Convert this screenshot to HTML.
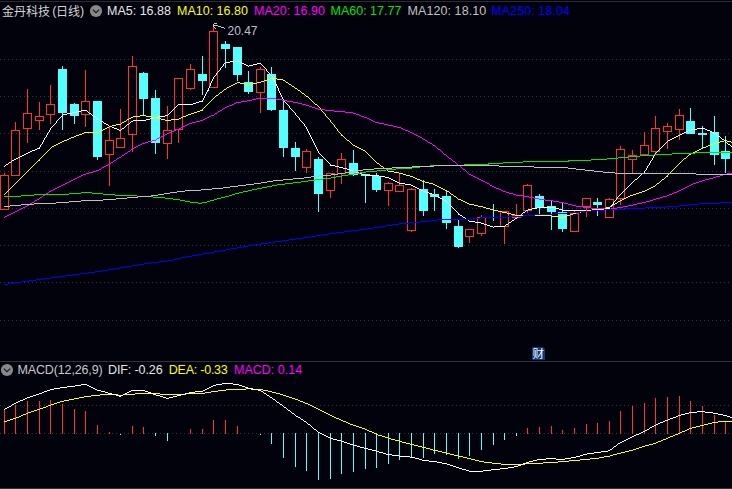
<!DOCTYPE html><html><head><meta charset="utf-8"><title>chart</title><style>
html,body{margin:0;padding:0;background:#02020c;}
body{width:732px;height:489px;overflow:hidden;position:relative;font-family:"Liberation Sans","Noto Sans CJK SC",sans-serif;}
.t{position:absolute;white-space:nowrap;font-size:12.5px;line-height:14px;height:14px;}
.cj{font-size:12px;position:relative;top:0.5px;}
</style></head><body>
<svg width="732" height="489" viewBox="0 0 732 489" shape-rendering="crispEdges" style="position:absolute;left:0;top:0">
<g stroke="#36363a" stroke-width="1" stroke-dasharray="1 3">
<line x1="0" y1="59.5" x2="732" y2="59.5"/>
<line x1="0" y1="96.5" x2="732" y2="96.5"/>
<line x1="0" y1="133.5" x2="732" y2="133.5"/>
<line x1="0" y1="171.5" x2="732" y2="171.5"/>
<line x1="0" y1="208.5" x2="732" y2="208.5"/>
<line x1="0" y1="245.5" x2="732" y2="245.5"/>
<line x1="0" y1="282.5" x2="732" y2="282.5"/>
<line x1="0" y1="320.5" x2="732" y2="320.5"/>
<line x1="0" y1="405.5" x2="732" y2="405.5"/>
<line x1="0" y1="433.5" x2="732" y2="433.5"/>
</g>
<rect x="0" y="1" width="732" height="1" fill="#2c2c30"/>
<rect x="22" y="0" width="1" height="1" fill="#3a3a3c"/>
<rect x="0" y="361" width="732" height="1" fill="#323234"/>
<rect x="0" y="488" width="732" height="1" fill="#323234"/>
<rect x="4" y="173" width="1" height="2" fill="#ff3232"/>
<rect x="0.5" y="175.5" width="8" height="34" fill="none" stroke="#ff3232" stroke-width="1"/>
<rect x="15" y="122" width="1" height="8" fill="#ff3232"/>
<rect x="11.5" y="130.5" width="8" height="45" fill="none" stroke="#ff3232" stroke-width="1"/>
<rect x="27" y="89" width="1" height="24" fill="#ff3232"/>
<rect x="27" y="129" width="1" height="14" fill="#ff3232"/>
<rect x="23.5" y="113.5" width="8" height="15" fill="none" stroke="#ff3232" stroke-width="1"/>
<rect x="39" y="102" width="1" height="14" fill="#ff3232"/>
<rect x="39" y="121" width="1" height="9" fill="#ff3232"/>
<rect x="35.5" y="116.5" width="8" height="4" fill="none" stroke="#ff3232" stroke-width="1"/>
<rect x="50" y="85" width="1" height="19" fill="#ff3232"/>
<rect x="50" y="115" width="1" height="9" fill="#ff3232"/>
<rect x="46.5" y="104.5" width="8" height="10" fill="none" stroke="#ff3232" stroke-width="1"/>
<rect x="62" y="66" width="1" height="64" fill="#54ffff"/>
<rect x="58" y="69" width="9" height="44" fill="#54ffff"/>
<rect x="74" y="103" width="1" height="21" fill="#54ffff"/>
<rect x="70" y="104" width="9" height="12" fill="#54ffff"/>
<rect x="85" y="70" width="1" height="31" fill="#ff3232"/>
<rect x="85" y="115" width="1" height="12" fill="#ff3232"/>
<rect x="81.5" y="101.5" width="8" height="13" fill="none" stroke="#ff3232" stroke-width="1"/>
<rect x="97" y="101" width="1" height="59" fill="#54ffff"/>
<rect x="93" y="101" width="9" height="56" fill="#54ffff"/>
<rect x="109" y="127" width="1" height="13" fill="#ff3232"/>
<rect x="109" y="155" width="1" height="31" fill="#ff3232"/>
<rect x="105.5" y="140.5" width="8" height="14" fill="none" stroke="#ff3232" stroke-width="1"/>
<rect x="120" y="109" width="1" height="29" fill="#ff3232"/>
<rect x="116.5" y="138.5" width="8" height="9" fill="none" stroke="#ff3232" stroke-width="1"/>
<rect x="132" y="56" width="1" height="10" fill="#ff3232"/>
<rect x="132" y="135" width="1" height="17" fill="#ff3232"/>
<rect x="128.5" y="66.5" width="8" height="68" fill="none" stroke="#ff3232" stroke-width="1"/>
<rect x="143" y="72" width="1" height="44" fill="#54ffff"/>
<rect x="139" y="73" width="9" height="26" fill="#54ffff"/>
<rect x="155" y="90" width="1" height="64" fill="#54ffff"/>
<rect x="151" y="98" width="9" height="45" fill="#54ffff"/>
<rect x="167" y="106" width="1" height="24" fill="#ff3232"/>
<rect x="167" y="144" width="1" height="15" fill="#ff3232"/>
<rect x="163.5" y="130.5" width="8" height="13" fill="none" stroke="#ff3232" stroke-width="1"/>
<rect x="178" y="130" width="1" height="13" fill="#ff3232"/>
<rect x="174.5" y="78.5" width="8" height="51" fill="none" stroke="#ff3232" stroke-width="1"/>
<rect x="190" y="64" width="1" height="5" fill="#ff3232"/>
<rect x="190" y="89" width="1" height="1" fill="#ff3232"/>
<rect x="186.5" y="69.5" width="8" height="19" fill="none" stroke="#ff3232" stroke-width="1"/>
<rect x="202" y="56" width="1" height="39" fill="#54ffff"/>
<rect x="198" y="74" width="9" height="7" fill="#54ffff"/>
<rect x="213" y="26" width="1" height="5" fill="#ff3232"/>
<rect x="209.5" y="31.5" width="8" height="56" fill="none" stroke="#ff3232" stroke-width="1"/>
<rect x="225" y="41" width="1" height="27" fill="#54ffff"/>
<rect x="221" y="44" width="9" height="5" fill="#54ffff"/>
<rect x="237" y="47" width="1" height="34" fill="#54ffff"/>
<rect x="233" y="47" width="9" height="28" fill="#54ffff"/>
<rect x="248" y="71" width="1" height="23" fill="#54ffff"/>
<rect x="244" y="82" width="9" height="10" fill="#54ffff"/>
<rect x="260" y="67" width="1" height="2" fill="#ff3232"/>
<rect x="260" y="93" width="1" height="20" fill="#ff3232"/>
<rect x="256.5" y="69.5" width="8" height="23" fill="none" stroke="#ff3232" stroke-width="1"/>
<rect x="271" y="67" width="1" height="44" fill="#54ffff"/>
<rect x="267" y="74" width="9" height="36" fill="#54ffff"/>
<rect x="283" y="101" width="1" height="56" fill="#54ffff"/>
<rect x="279" y="110" width="9" height="38" fill="#54ffff"/>
<rect x="295" y="142" width="1" height="29" fill="#54ffff"/>
<rect x="291" y="148" width="9" height="9" fill="#54ffff"/>
<rect x="306" y="149" width="1" height="2" fill="#ff3232"/>
<rect x="306" y="168" width="1" height="5" fill="#ff3232"/>
<rect x="302.5" y="151.5" width="8" height="16" fill="none" stroke="#ff3232" stroke-width="1"/>
<rect x="318" y="157" width="1" height="55" fill="#54ffff"/>
<rect x="314" y="159" width="9" height="35" fill="#54ffff"/>
<rect x="330" y="191" width="1" height="7" fill="#ff3232"/>
<rect x="326.5" y="173.5" width="8" height="17" fill="none" stroke="#ff3232" stroke-width="1"/>
<rect x="341" y="153" width="1" height="6" fill="#ff3232"/>
<rect x="341" y="174" width="1" height="10" fill="#ff3232"/>
<rect x="337.5" y="159.5" width="8" height="14" fill="none" stroke="#ff3232" stroke-width="1"/>
<rect x="353" y="150" width="1" height="26" fill="#54ffff"/>
<rect x="349" y="163" width="9" height="12" fill="#54ffff"/>
<rect x="365" y="174" width="1" height="29" fill="#54ffff"/>
<rect x="361" y="174" width="9" height="2" fill="#54ffff"/>
<rect x="376" y="173" width="1" height="19" fill="#54ffff"/>
<rect x="372" y="176" width="9" height="14" fill="#54ffff"/>
<rect x="388" y="182" width="1" height="1" fill="#ff3232"/>
<rect x="388" y="191" width="1" height="15" fill="#ff3232"/>
<rect x="384.5" y="183.5" width="8" height="7" fill="none" stroke="#ff3232" stroke-width="1"/>
<rect x="399" y="173" width="1" height="12" fill="#ff3232"/>
<rect x="395.5" y="185.5" width="8" height="6" fill="none" stroke="#ff3232" stroke-width="1"/>
<rect x="411" y="188" width="1" height="1" fill="#ff3232"/>
<rect x="411" y="231" width="1" height="1" fill="#ff3232"/>
<rect x="407.5" y="189.5" width="8" height="41" fill="none" stroke="#ff3232" stroke-width="1"/>
<rect x="423" y="180" width="1" height="36" fill="#54ffff"/>
<rect x="419" y="189" width="9" height="22" fill="#54ffff"/>
<rect x="434" y="189" width="1" height="22" fill="#54ffff"/>
<rect x="430" y="194" width="9" height="3" fill="#54ffff"/>
<rect x="446" y="190" width="1" height="39" fill="#54ffff"/>
<rect x="442" y="196" width="9" height="27" fill="#54ffff"/>
<rect x="458" y="219" width="1" height="29" fill="#54ffff"/>
<rect x="454" y="226" width="9" height="21" fill="#54ffff"/>
<rect x="469" y="237" width="1" height="6" fill="#ff3232"/>
<rect x="465.5" y="229.5" width="8" height="7" fill="none" stroke="#ff3232" stroke-width="1"/>
<rect x="481" y="215" width="1" height="2" fill="#ff3232"/>
<rect x="481" y="234" width="1" height="2" fill="#ff3232"/>
<rect x="477.5" y="217.5" width="8" height="16" fill="none" stroke="#ff3232" stroke-width="1"/>
<rect x="493" y="204" width="1" height="17" fill="#54ffff"/>
<rect x="489" y="217" width="9" height="1" fill="#54ffff"/>
<rect x="504" y="227" width="1" height="17" fill="#ff3232"/>
<rect x="500.5" y="211.5" width="8" height="15" fill="none" stroke="#ff3232" stroke-width="1"/>
<rect x="516" y="204" width="1" height="11" fill="#ff3232"/>
<rect x="512.5" y="215.5" width="8" height="2" fill="none" stroke="#ff3232" stroke-width="1"/>
<rect x="527" y="184" width="1" height="1" fill="#ff3232"/>
<rect x="527" y="211" width="1" height="2" fill="#ff3232"/>
<rect x="523.5" y="185.5" width="8" height="25" fill="none" stroke="#ff3232" stroke-width="1"/>
<rect x="539" y="194" width="1" height="20" fill="#54ffff"/>
<rect x="535" y="196" width="9" height="12" fill="#54ffff"/>
<rect x="551" y="201" width="1" height="29" fill="#54ffff"/>
<rect x="547" y="206" width="9" height="6" fill="#54ffff"/>
<rect x="562" y="202" width="1" height="30" fill="#54ffff"/>
<rect x="558" y="212" width="9" height="17" fill="#54ffff"/>
<rect x="574" y="210" width="1" height="3" fill="#ff3232"/>
<rect x="570.5" y="213.5" width="8" height="18" fill="none" stroke="#ff3232" stroke-width="1"/>
<rect x="586" y="207" width="1" height="10" fill="#ff3232"/>
<rect x="582.5" y="198.5" width="8" height="8" fill="none" stroke="#ff3232" stroke-width="1"/>
<rect x="597" y="198" width="1" height="18" fill="#54ffff"/>
<rect x="593" y="202" width="9" height="3" fill="#54ffff"/>
<rect x="609" y="198" width="1" height="1" fill="#ff3232"/>
<rect x="605.5" y="199.5" width="8" height="18" fill="none" stroke="#ff3232" stroke-width="1"/>
<rect x="620" y="146" width="1" height="3" fill="#ff3232"/>
<rect x="620" y="199" width="1" height="6" fill="#ff3232"/>
<rect x="616.5" y="149.5" width="8" height="49" fill="none" stroke="#ff3232" stroke-width="1"/>
<rect x="632" y="150" width="1" height="5" fill="#ff3232"/>
<rect x="632" y="160" width="1" height="13" fill="#ff3232"/>
<rect x="628.5" y="155.5" width="8" height="4" fill="none" stroke="#ff3232" stroke-width="1"/>
<rect x="644" y="132" width="1" height="13" fill="#ff3232"/>
<rect x="640.5" y="145.5" width="8" height="9" fill="none" stroke="#ff3232" stroke-width="1"/>
<rect x="655" y="116" width="1" height="12" fill="#ff3232"/>
<rect x="655" y="152" width="1" height="3" fill="#ff3232"/>
<rect x="651.5" y="128.5" width="8" height="23" fill="none" stroke="#ff3232" stroke-width="1"/>
<rect x="667" y="123" width="1" height="3" fill="#ff3232"/>
<rect x="667" y="132" width="1" height="17" fill="#ff3232"/>
<rect x="663.5" y="126.5" width="8" height="5" fill="none" stroke="#ff3232" stroke-width="1"/>
<rect x="679" y="109" width="1" height="6" fill="#ff3232"/>
<rect x="679" y="130" width="1" height="10" fill="#ff3232"/>
<rect x="675.5" y="115.5" width="8" height="14" fill="none" stroke="#ff3232" stroke-width="1"/>
<rect x="690" y="108" width="1" height="26" fill="#54ffff"/>
<rect x="686" y="121" width="9" height="13" fill="#54ffff"/>
<rect x="702" y="126" width="1" height="22" fill="#54ffff"/>
<rect x="698" y="133" width="9" height="2" fill="#54ffff"/>
<rect x="714" y="116" width="1" height="49" fill="#54ffff"/>
<rect x="710" y="132" width="9" height="23" fill="#54ffff"/>
<rect x="725" y="136" width="1" height="37" fill="#54ffff"/>
<rect x="721" y="151" width="9" height="8" fill="#54ffff"/>
<path fill="#ffffff" d="M365 175h14v1h-14zM117 129h2v1h-2zM691 129h6v1h-6zM705 129h2v1h-2zM97 119h2v1h-2zM146 119h4v1h-4zM537 207h18v1h-18zM9 162h2v1h-2zM230 61h10v1h-10zM335 166h4v1h-4zM526 210h2v1h-2zM562 210h24v1h-24zM587 210h11v1h-11zM14 159h2v1h-2zM99 120h2v1h-2zM133 120h13v1h-13zM67 113h5v1h-5zM89 113h2v1h-2zM165 115h3v1h-3zM399 183h6v1h-6zM668 140h2v1h-2zM405 184h6v1h-6zM154 117h5v1h-5zM523 212h2v1h-2zM114 128h3v1h-3zM122 128h2v1h-2zM697 128h8v1h-8zM32 150h3v1h-3zM512 220h2v1h-2zM77 111h4v1h-4zM93 116h2v1h-2zM159 116h6v1h-6zM438 197h2v1h-2zM104 123h2v1h-2zM678 135h2v1h-2zM193 103h3v1h-3zM379 176h6v1h-6zM532 208h5v1h-5zM555 208h4v1h-4zM604 208h6v1h-6zM119 130h2v1h-2zM688 130h3v1h-3zM707 130h3v1h-3zM423 191h3v1h-3zM225 62h5v1h-5zM240 62h2v1h-2zM28 152h2v1h-2zM676 136h2v1h-2zM718 136h2v1h-2zM63 114h4v1h-4zM339 167h4v1h-4zM6 164h2v1h-2zM330 165h5v1h-5zM343 168h4v1h-4zM490 226h3v1h-3zM494 226h11v1h-11zM475 222h6v1h-6zM509 222h2v1h-2zM244 64h2v1h-2zM253 64h4v1h-4zM419 189h2v1h-2zM674 137h2v1h-2zM150 118h4v1h-4zM728 144h2v1h-2zM356 172h3v1h-3zM463 217h2v1h-2zM487 225h3v1h-3zM178 104h15v1h-15zM385 177h4v1h-4zM395 181h2v1h-2zM109 126h3v1h-3zM415 187h2v1h-2zM528 209h4v1h-4zM559 209h3v1h-3zM598 209h6v1h-6zM421 190h2v1h-2zM458 214h2v1h-2zM106 124h2v1h-2zM127 124h2v1h-2zM24 154h2v1h-2zM347 169h3v1h-3zM101 121h2v1h-2zM131 121h2v1h-2zM481 223h3v1h-3zM686 131h2v1h-2zM710 131h2v1h-2zM429 193h3v1h-3zM426 192h3v1h-3zM199 101h4v1h-4zM37 148h3v1h-3zM484 224h3v1h-3zM506 224h2v1h-2zM81 110h6v1h-6zM684 132h2v1h-2zM712 132h2v1h-2zM442 199h2v1h-2zM682 133h2v1h-2zM714 133h2v1h-2zM16 158h2v1h-2zM30 151h2v1h-2zM112 127h2v1h-2zM444 200h2v1h-2zM20 156h2v1h-2zM72 112h5v1h-5zM670 139h2v1h-2zM722 139h2v1h-2zM469 221h6v1h-6zM413 186h2v1h-2zM440 198h2v1h-2zM432 194h2v1h-2zM246 65h2v1h-2zM249 65h4v1h-4zM35 149h2v1h-2zM350 170h3v1h-3zM434 195h2v1h-2zM196 102h3v1h-3zM466 219h2v1h-2zM353 171h3v1h-3zM436 196h2v1h-2zM12 160h2v1h-2zM242 63h2v1h-2zM257 63h4v1h-4zM362 174h3v1h-3zM22 155h2v1h-2zM515 218h2v1h-2zM391 179h2v1h-2zM635 179h2v1h-2zM26 153h2v1h-2zM359 173h3v1h-3zM642 173h2v1h-2zM680 134h2v1h-2zM18 157h2v1h-2zM417 188h2v1h-2zM389 178h2v1h-2zM411 185h2v1h-2zM207 90h2v1h-2zM672 138h2v1h-2zM397 182h2v1h-2zM393 180h2v1h-2zM460 215h2v1h-2zM519 215h2v1h-2zM298 117h1v1h-1zM454 209h1v1h-1zM60 117h1v1h-1zM307 129h1v2h-1zM61 116h1v1h-1zM644 171h1v2h-1zM613 202h1v2h-1zM631 183h1v1h-1zM450 205h1v1h-1zM208 88h1v2h-1zM468 220h1v1h-1zM311 137h1v2h-1zM299 118h1v2h-1zM212 79h1v2h-1zM293 111h1v1h-1zM314 143h1v2h-1zM609 207h1v1h-1zM446 201h1v1h-1zM456 211h1v1h-1zM266 69h1v2h-1zM43 140h1v2h-1zM5 165h1v1h-1zM289 106h1v2h-1zM92 115h1v1h-1zM277 86h1v2h-1zM55 123h1v1h-1zM716 134h1v1h-1zM290 108h1v1h-1zM641 174h1v1h-1zM514 219h1v1h-1zM308 131h1v2h-1zM505 225h1v1h-1zM651 160h1v1h-1zM666 142h1v1h-1zM457 212h1v1h-1zM275 82h1v2h-1zM204 96h1v2h-1zM206 92h1v2h-1zM296 115h1v1h-1zM205 94h1v2h-1zM281 95h1v2h-1zM627 187h1v1h-1zM518 216h1v1h-1zM171 111h1v1h-1zM295 113h1v2h-1zM315 145h1v2h-1zM453 208h1v1h-1zM39 147h1v1h-1zM324 158h1v1h-1zM458 213h1v1h-1zM297 116h1v1h-1zM617 197h1v1h-1zM129 123h1v1h-1zM717 135h1v1h-1zM291 109h1v1h-1zM108 125h1v1h-1zM625 189h1v1h-1zM282 97h1v2h-1zM169 113h1v1h-1zM320 154h1v1h-1zM103 122h1v1h-1zM177 105h1v1h-1zM465 218h1v1h-1zM49 130h1v2h-1zM655 153h1v2h-1zM656 152h1v1h-1zM306 127h1v2h-1zM623 191h1v1h-1zM313 141h1v2h-1zM91 114h1v1h-1zM321 155h1v1h-1zM647 166h1v2h-1zM273 78h1v2h-1zM280 93h1v2h-1zM210 83h1v3h-1zM725 141h1v1h-1zM203 98h1v2h-1zM202 100h1v1h-1zM220 68h1v2h-1zM222 66h1v1h-1zM646 168h1v2h-1zM455 210h1v1h-1zM648 165h1v1h-1zM586 211h1v1h-1zM310 135h1v2h-1zM216 73h1v2h-1zM59 118h1v1h-1zM327 161h1v1h-1zM451 206h1v1h-1zM218 71h1v1h-1zM322 156h1v1h-1zM45 137h1v1h-1zM294 112h1v1h-1zM47 133h1v2h-1zM652 158h1v2h-1zM323 157h1v1h-1zM318 151h1v2h-1zM57 120h1v1h-1zM214 76h1v1h-1zM328 162h1v1h-1zM640 175h1v1h-1zM215 75h1v1h-1zM278 88h1v3h-1zM213 77h1v2h-1zM44 138h1v2h-1zM650 161h1v2h-1zM4 166h1v1h-1zM653 156h1v2h-1zM304 124h1v2h-1zM727 143h1v1h-1zM53 125h1v1h-1zM269 73h1v1h-1zM54 124h1v1h-1zM56 121h1v2h-1zM517 217h1v1h-1zM522 213h1v1h-1zM274 80h1v2h-1zM633 181h1v1h-1zM309 133h1v2h-1zM508 223h1v1h-1zM285 102h1v1h-1zM626 188h1v1h-1zM221 67h1v1h-1zM51 127h1v1h-1zM50 128h1v2h-1zM52 126h1v1h-1zM276 84h1v2h-1zM634 180h1v1h-1zM664 144h1v1h-1zM611 205h1v1h-1zM624 190h1v1h-1zM41 144h1v1h-1zM87 111h1v1h-1zM521 214h1v1h-1zM316 147h1v2h-1zM42 142h1v2h-1zM305 126h1v1h-1zM325 159h1v1h-1zM632 182h1v1h-1zM211 81h1v2h-1zM662 146h1v1h-1zM663 145h1v1h-1zM292 110h1v1h-1zM272 76h1v2h-1zM40 145h1v2h-1zM286 103h1v1h-1zM223 64h1v2h-1zM525 211h1v1h-1zM649 163h1v2h-1zM511 221h1v1h-1zM312 139h1v2h-1zM329 163h1v1h-1zM661 147h1v1h-1zM175 107h1v1h-1zM95 117h1v1h-1zM219 70h1v1h-1zM279 91h1v2h-1zM287 104h1v1h-1zM267 71h1v1h-1zM46 135h1v2h-1zM621 193h1v1h-1zM622 192h1v1h-1zM209 86h1v2h-1zM268 72h1v1h-1zM326 160h1v1h-1zM726 142h1v1h-1zM283 99h1v2h-1zM173 109h1v1h-1zM58 119h1v1h-1zM302 122h1v1h-1zM248 66h1v1h-1zM126 125h1v1h-1zM660 148h1v1h-1zM619 195h1v1h-1zM620 194h1v1h-1zM121 129h1v1h-1zM172 110h1v1h-1zM288 105h1v1h-1zM658 150h1v1h-1zM616 198h1v2h-1zM317 149h1v2h-1zM217 72h1v1h-1zM8 163h1v1h-1zM720 137h1v1h-1zM284 101h1v1h-1zM303 123h1v1h-1zM654 155h1v1h-1zM612 204h1v1h-1zM615 200h1v1h-1zM207 91h1v1h-1zM638 177h1v1h-1zM270 74h1v1h-1zM639 176h1v1h-1zM721 138h1v1h-1zM732 147h1v1h-1zM449 204h1v1h-1zM271 75h1v1h-1zM637 178h1v1h-1zM462 216h1v1h-1zM265 68h1v1h-1zM11 161h1v1h-1zM330 164h1v1h-1zM176 106h1v1h-1zM88 112h1v1h-1zM261 64h1v1h-1zM610 206h1v1h-1zM300 120h1v1h-1zM630 184h1v1h-1zM174 108h1v1h-1zM628 186h1v1h-1zM301 121h1v1h-1zM493 227h1v1h-1zM224 63h1v1h-1zM96 118h1v1h-1zM629 185h1v1h-1zM262 65h1v1h-1zM452 207h1v1h-1zM659 149h1v1h-1zM730 145h1v1h-1zM667 141h1v1h-1zM447 202h1v1h-1zM448 203h1v1h-1zM48 132h1v1h-1zM263 66h1v1h-1zM657 151h1v1h-1zM319 153h1v1h-1zM665 143h1v1h-1zM264 67h1v1h-1zM124 127h1v1h-1zM125 126h1v1h-1zM130 122h1v1h-1zM618 196h1v1h-1zM170 112h1v1h-1zM62 115h1v1h-1zM731 146h1v1h-1zM724 140h1v1h-1zM645 170h1v1h-1zM614 201h1v1h-1zM168 114h1v1h-1z"/>
<path fill="#ffff00" d="M639 192h3v1h-3zM67 139h2v1h-2zM71 137h3v1h-3zM439 187h2v1h-2zM651 187h2v1h-2zM636 193h3v1h-3zM551 216h8v1h-8zM564 216h3v1h-3zM689 154h2v1h-2zM235 83h2v1h-2zM240 83h4v1h-4zM253 83h4v1h-4zM465 202h2v1h-2zM493 210h5v1h-5zM587 210h5v1h-5zM295 88h2v1h-2zM483 207h3v1h-3zM606 207h4v1h-4zM515 215h36v1h-36zM567 215h3v1h-3zM133 116h7v1h-7zM146 116h6v1h-6zM183 116h3v1h-3zM122 122h2v1h-2zM62 141h2v1h-2zM720 141h4v1h-4zM727 141h4v1h-4zM502 212h5v1h-5zM576 212h5v1h-5zM486 208h4v1h-4zM598 208h8v1h-8zM124 121h2v1h-2zM429 183h4v1h-4zM657 183h2v1h-2zM406 175h4v1h-4zM229 86h2v1h-2zM292 86h2v1h-2zM469 204h5v1h-5zM613 204h2v1h-2zM433 184h2v1h-2zM447 191h2v1h-2zM642 191h3v1h-3zM82 133h2v1h-2zM131 117h2v1h-2zM152 117h5v1h-5zM181 117h2v1h-2zM507 213h4v1h-4zM573 213h3v1h-3zM227 87h2v1h-2zM103 129h2v1h-2zM267 79h3v1h-3zM277 79h6v1h-6zM224 89h2v1h-2zM461 200h2v1h-2zM620 200h2v1h-2zM52 146h2v1h-2zM355 146h2v1h-2zM706 146h2v1h-2zM399 173h4v1h-4zM233 84h2v1h-2zM244 84h4v1h-4zM249 84h4v1h-4zM289 84h2v1h-2zM194 112h3v1h-3zM140 115h6v1h-6zM186 115h2v1h-2zM64 140h3v1h-3zM347 140h2v1h-2zM724 140h3v1h-3zM84 132h13v1h-13zM363 150h2v1h-2zM697 150h2v1h-2zM498 211h4v1h-4zM581 211h6v1h-6zM624 198h2v1h-2zM270 78h7v1h-7zM359 148h2v1h-2zM701 148h2v1h-2zM357 147h2v1h-2zM703 147h3v1h-3zM458 199h3v1h-3zM622 199h2v1h-2zM129 118h2v1h-2zM157 118h4v1h-4zM179 118h2v1h-2zM58 143h2v1h-2zM713 143h3v1h-3zM384 168h2v1h-2zM76 135h3v1h-3zM341 135h2v1h-2zM56 144h2v1h-2zM710 144h3v1h-3zM511 214h4v1h-4zM570 214h3v1h-3zM220 92h2v1h-2zM467 203h2v1h-2zM615 203h2v1h-2zM403 174h3v1h-3zM261 81h3v1h-3zM306 96h2v1h-2zM188 114h3v1h-3zM109 126h3v1h-3zM388 171h6v1h-6zM490 209h3v1h-3zM592 209h6v1h-6zM127 119h2v1h-2zM161 119h4v1h-4zM171 119h8v1h-8zM216 95h2v1h-2zM454 196h2v1h-2zM628 196h2v1h-2zM463 201h2v1h-2zM618 201h2v1h-2zM54 145h2v1h-2zM353 145h2v1h-2zM708 145h2v1h-2zM435 185h2v1h-2zM381 166h2v1h-2zM422 181h3v1h-3zM101 130h2v1h-2zM237 82h3v1h-3zM257 82h4v1h-4zM286 82h2v1h-2zM200 110h3v1h-3zM315 104h2v1h-2zM417 179h3v1h-3zM662 179h2v1h-2zM451 194h2v1h-2zM633 194h3v1h-3zM69 138h2v1h-2zM474 205h4v1h-4zM60 142h2v1h-2zM716 142h4v1h-4zM731 142h2v1h-2zM410 176h3v1h-3zM666 176h2v1h-2zM79 134h3v1h-3zM630 195h3v1h-3zM165 120h6v1h-6zM445 190h2v1h-2zM645 190h2v1h-2zM105 128h2v1h-2zM415 178h2v1h-2zM302 93h2v1h-2zM425 182h4v1h-4zM197 111h3v1h-3zM116 124h5v1h-5zM377 163h2v1h-2zM394 172h5v1h-5zM191 113h3v1h-3zM478 206h5v1h-5zM610 206h2v1h-2zM264 80h3v1h-3zM283 80h2v1h-2zM441 188h2v1h-2zM649 188h2v1h-2zM684 158h2v1h-2zM112 125h4v1h-4zM443 189h2v1h-2zM647 189h2v1h-2zM107 127h2v1h-2zM437 186h2v1h-2zM653 186h2v1h-2zM559 217h5v1h-5zM298 90h2v1h-2zM626 197h2v1h-2zM231 85h2v1h-2zM99 131h2v1h-2zM693 152h2v1h-2zM361 149h2v1h-2zM699 149h2v1h-2zM695 151h2v1h-2zM691 153h2v1h-2zM420 180h2v1h-2zM413 177h2v1h-2zM74 136h2v1h-2zM38 160h2v1h-2zM6 192h1v1h-1zM346 139h1v1h-1zM372 158h1v1h-1zM14 184h1v1h-1zM383 167h1v1h-1zM368 154h1v1h-1zM305 95h1v1h-1zM336 128h1v1h-1zM322 111h1v1h-1zM617 202h1v1h-1zM323 112h1v1h-1zM29 169h1v1h-1zM226 88h1v1h-1zM668 174h1v1h-1zM37 161h1v1h-1zM337 129h1v2h-1zM331 122h1v1h-1zM27 171h1v1h-1zM661 180h1v1h-1zM667 175h1v1h-1zM612 205h1v1h-1zM4 194h1v1h-1zM35 163h1v1h-1zM656 184h1v1h-1zM343 136h1v1h-1zM665 177h1v1h-1zM681 161h1v1h-1zM375 161h1v1h-1zM294 87h1v1h-1zM50 148h1v1h-1zM214 97h1v1h-1zM215 96h1v1h-1zM297 89h1v1h-1zM325 114h1v2h-1zM48 150h1v1h-1zM319 107h1v1h-1zM334 125h1v2h-1zM17 181h1v1h-1zM288 83h1v1h-1zM25 173h1v1h-1zM456 197h1v1h-1zM449 192h1v1h-1zM15 183h1v1h-1zM320 108h1v2h-1zM376 162h1v1h-1zM23 175h1v1h-1zM204 107h1v1h-1zM205 106h1v1h-1zM450 193h1v1h-1zM202 109h1v1h-1zM45 153h1v1h-1zM203 108h1v1h-1zM677 165h1v1h-1zM457 198h1v1h-1zM248 85h1v1h-1zM36 162h1v1h-1zM43 155h1v1h-1zM675 167h1v1h-1zM44 154h1v1h-1zM317 105h1v1h-1zM310 99h1v1h-1zM673 169h1v1h-1zM674 168h1v1h-1zM655 185h1v1h-1zM11 187h1v1h-1zM121 123h1v1h-1zM332 123h1v1h-1zM318 106h1v1h-1zM352 144h1v1h-1zM219 93h1v1h-1zM659 182h1v1h-1zM660 181h1v1h-1zM33 165h1v1h-1zM300 91h1v1h-1zM327 117h1v1h-1zM24 174h1v1h-1zM218 94h1v1h-1zM223 90h1v1h-1zM31 167h1v1h-1zM301 92h1v1h-1zM98 132h1v1h-1zM349 141h1v1h-1zM333 124h1v1h-1zM212 99h1v1h-1zM213 98h1v1h-1zM312 101h1v1h-1zM386 169h1v1h-1zM22 176h1v1h-1zM308 97h1v1h-1zM30 168h1v1h-1zM46 152h1v1h-1zM222 91h1v1h-1zM97 133h1v1h-1zM211 100h1v1h-1zM330 120h1v2h-1zM676 166h1v1h-1zM13 185h1v1h-1zM683 159h1v1h-1zM350 142h1v1h-1zM210 101h1v1h-1zM369 155h1v1h-1zM21 177h1v1h-1zM314 103h1v1h-1zM339 132h1v1h-1zM12 186h1v1h-1zM365 151h1v1h-1zM682 160h1v1h-1zM19 179h1v1h-1zM10 188h1v1h-1zM686 157h1v1h-1zM34 164h1v1h-1zM18 180h1v1h-1zM285 81h1v1h-1zM42 156h1v1h-1zM311 100h1v1h-1zM291 85h1v1h-1zM326 116h1v1h-1zM340 133h1v1h-1zM32 166h1v1h-1zM664 178h1v1h-1zM671 171h1v1h-1zM40 158h1v1h-1zM672 170h1v1h-1zM9 189h1v1h-1zM379 164h1v1h-1zM341 134h1v1h-1zM367 153h1v1h-1zM670 172h1v1h-1zM453 195h1v1h-1zM7 191h1v1h-1zM328 118h1v1h-1zM380 165h1v1h-1zM373 159h1v1h-1zM126 120h1v1h-1zM5 193h1v1h-1zM313 102h1v1h-1zM387 170h1v1h-1zM309 98h1v1h-1zM51 147h1v1h-1zM20 178h1v1h-1zM688 155h1v1h-1zM329 119h1v1h-1zM28 170h1v1h-1zM338 131h1v1h-1zM374 160h1v1h-1zM209 102h1v1h-1zM351 143h1v1h-1zM687 156h1v1h-1zM344 137h1v1h-1zM370 156h1v1h-1zM26 172h1v1h-1zM324 113h1v1h-1zM207 104h1v1h-1zM208 103h1v1h-1zM366 152h1v1h-1zM41 157h1v1h-1zM680 162h1v1h-1zM206 105h1v1h-1zM49 149h1v1h-1zM304 94h1v1h-1zM321 110h1v1h-1zM335 127h1v1h-1zM39 159h1v1h-1zM345 138h1v1h-1zM8 190h1v1h-1zM678 164h1v1h-1zM371 157h1v1h-1zM679 163h1v1h-1zM47 151h1v1h-1zM16 182h1v1h-1zM669 173h1v1h-1z"/>
<path fill="#ff00ff" d="M83 174h3v1h-3zM469 174h2v1h-2zM723 174h4v1h-4zM207 117h2v1h-2zM364 117h3v1h-3zM65 183h2v1h-2zM487 183h2v1h-2zM693 183h3v1h-3zM218 111h2v1h-2zM334 111h11v1h-11zM205 118h2v1h-2zM367 118h2v1h-2zM21 208h2v1h-2zM591 208h14v1h-14zM611 208h6v1h-6zM169 132h2v1h-2zM410 132h2v1h-2zM179 128h2v1h-2zM401 128h2v1h-2zM148 141h4v1h-4zM23 207h2v1h-2zM583 207h8v1h-8zM617 207h6v1h-6zM43 195h2v1h-2zM516 195h7v1h-7zM667 195h2v1h-2zM183 126h2v1h-2zM393 126h4v1h-4zM523 196h6v1h-6zM663 196h4v1h-4zM35 200h2v1h-2zM545 200h8v1h-8zM650 200h3v1h-3zM176 129h3v1h-3zM403 129h2v1h-2zM79 176h2v1h-2zM473 176h2v1h-2zM716 176h4v1h-4zM30 203h2v1h-2zM564 203h4v1h-4zM637 203h5v1h-5zM40 197h2v1h-2zM529 197h5v1h-5zM660 197h3v1h-3zM142 143h3v1h-3zM430 143h2v1h-2zM89 172h4v1h-4zM174 130h2v1h-2zM405 130h3v1h-3zM159 137h2v1h-2zM420 137h2v1h-2zM223 108h2v1h-2zM315 108h3v1h-3zM104 166h2v1h-2zM252 99h4v1h-4zM276 99h6v1h-6zM513 194h3v1h-3zM669 194h3v1h-3zM232 104h2v1h-2zM302 104h4v1h-4zM181 127h2v1h-2zM397 127h4v1h-4zM234 103h2v1h-2zM298 103h4v1h-4zM189 123h3v1h-3zM379 123h5v1h-5zM157 138h2v1h-2zM117 158h2v1h-2zM449 158h2v1h-2zM453 161h2v1h-2zM165 134h2v1h-2zM414 134h2v1h-2zM73 179h2v1h-2zM479 179h2v1h-2zM705 179h4v1h-4zM96 170h3v1h-3zM111 162h2v1h-2zM256 98h20v1h-20zM93 171h3v1h-3zM86 173h3v1h-3zM727 173h6v1h-6zM163 135h2v1h-2zM416 135h2v1h-2zM25 206h2v1h-2zM576 206h7v1h-7zM623 206h5v1h-5zM171 131h3v1h-3zM408 131h2v1h-2zM32 202h2v1h-2zM559 202h5v1h-5zM642 202h4v1h-4zM61 185h2v1h-2zM490 185h2v1h-2zM689 185h2v1h-2zM318 109h7v1h-7zM200 120h3v1h-3zM371 120h2v1h-2zM236 102h5v1h-5zM293 102h5v1h-5zM17 210h2v1h-2zM161 136h2v1h-2zM418 136h2v1h-2zM19 209h2v1h-2zM605 209h6v1h-6zM247 100h5v1h-5zM282 100h5v1h-5zM534 198h5v1h-5zM656 198h4v1h-4zM215 113h2v1h-2zM353 113h3v1h-3zM187 124h2v1h-2zM384 124h4v1h-4zM185 125h2v1h-2zM388 125h5v1h-5zM220 110h2v1h-2zM325 110h9v1h-9zM229 105h3v1h-3zM306 105h3v1h-3zM241 101h6v1h-6zM287 101h6v1h-6zM553 201h6v1h-6zM646 201h4v1h-4zM69 181h2v1h-2zM483 181h2v1h-2zM699 181h3v1h-3zM345 112h8v1h-8zM27 205h2v1h-2zM572 205h4v1h-4zM628 205h5v1h-5zM136 146h2v1h-2zM57 187h2v1h-2zM494 187h2v1h-2zM685 187h2v1h-2zM131 149h2v1h-2zM438 149h2v1h-2zM37 199h2v1h-2zM539 199h6v1h-6zM653 199h3v1h-3zM134 147h2v1h-2zM568 204h4v1h-4zM633 204h4v1h-4zM196 121h4v1h-4zM373 121h2v1h-2zM81 175h2v1h-2zM471 175h2v1h-2zM720 175h3v1h-3zM356 114h3v1h-3zM102 167h2v1h-2zM211 115h3v1h-3zM359 115h2v1h-2zM77 177h2v1h-2zM475 177h2v1h-2zM713 177h3v1h-3zM506 192h3v1h-3zM674 192h3v1h-3zM67 182h2v1h-2zM485 182h2v1h-2zM696 182h3v1h-3zM145 142h3v1h-3zM428 142h2v1h-2zM225 107h2v1h-2zM312 107h3v1h-3zM53 189h2v1h-2zM499 189h2v1h-2zM681 189h2v1h-2zM51 190h2v1h-2zM501 190h2v1h-2zM679 190h2v1h-2zM71 180h2v1h-2zM481 180h2v1h-2zM702 180h3v1h-3zM152 140h4v1h-4zM425 140h2v1h-2zM46 193h2v1h-2zM509 193h4v1h-4zM672 193h2v1h-2zM227 106h2v1h-2zM309 106h3v1h-3zM49 191h2v1h-2zM503 191h3v1h-3zM677 191h2v1h-2zM15 211h2v1h-2zM55 188h2v1h-2zM496 188h3v1h-3zM683 188h2v1h-2zM11 213h2v1h-2zM423 139h2v1h-2zM63 184h2v1h-2zM691 184h2v1h-2zM203 119h2v1h-2zM369 119h2v1h-2zM444 154h2v1h-2zM122 155h2v1h-2zM108 164h2v1h-2zM192 122h4v1h-4zM375 122h4v1h-4zM209 116h2v1h-2zM361 116h3v1h-3zM99 169h2v1h-2zM463 169h2v1h-2zM75 178h2v1h-2zM477 178h2v1h-2zM709 178h4v1h-4zM7 215h2v1h-2zM59 186h2v1h-2zM492 186h2v1h-2zM687 186h2v1h-2zM125 153h2v1h-2zM128 151h2v1h-2zM114 160h2v1h-2zM106 165h2v1h-2zM458 165h2v1h-2zM138 145h2v1h-2zM433 145h2v1h-2zM13 212h2v1h-2zM5 216h2v1h-2zM9 214h2v1h-2zM119 157h2v1h-2zM140 144h2v1h-2zM167 133h2v1h-2zM412 133h2v1h-2zM39 198h1v1h-1zM214 114h1v1h-1zM222 109h1v1h-1zM467 172h1v1h-1zM432 144h1v1h-1zM442 152h1v1h-1zM435 146h1v1h-1zM110 163h1v1h-1zM127 152h1v1h-1zM489 184h1v1h-1zM446 155h1v1h-1zM156 139h1v1h-1zM457 164h1v1h-1zM460 166h1v1h-1zM443 153h1v1h-1zM436 147h1v1h-1zM427 141h1v1h-1zM34 201h1v1h-1zM42 196h1v1h-1zM217 112h1v1h-1zM468 173h1v1h-1zM461 167h1v1h-1zM130 150h1v1h-1zM437 148h1v1h-1zM447 156h1v1h-1zM440 150h1v1h-1zM448 157h1v1h-1zM465 170h1v1h-1zM451 159h1v1h-1zM121 156h1v1h-1zM29 204h1v1h-1zM45 194h1v1h-1zM113 161h1v1h-1zM101 168h1v1h-1zM422 138h1v1h-1zM462 168h1v1h-1zM133 148h1v1h-1zM441 151h1v1h-1zM452 160h1v1h-1zM124 154h1v1h-1zM4 217h1v1h-1zM455 162h1v1h-1zM48 192h1v1h-1zM456 163h1v1h-1zM116 159h1v1h-1zM466 171h1v1h-1z"/>
<path fill="#00e600" d="M34 194h35v1h-35zM103 194h12v1h-12zM232 194h3v1h-3zM503 162h20v1h-20zM366 171h11v1h-11zM173 199h7v1h-7zM214 199h3v1h-3zM293 182h8v1h-8zM315 179h8v1h-8zM81 192h11v1h-11zM239 192h4v1h-4zM523 161h46v1h-46zM640 155h14v1h-14zM21 195h13v1h-13zM115 195h22v1h-22zM229 195h3v1h-3zM153 197h12v1h-12zM221 197h4v1h-4zM607 158h11v1h-11zM430 165h34v1h-34zM190 202h8v1h-8zM202 202h5v1h-5zM69 193h12v1h-12zM92 193h11v1h-11zM235 193h4v1h-4zM4 196h17v1h-17zM137 196h16v1h-16zM225 196h4v1h-4zM285 183h8v1h-8zM672 153h23v1h-23zM331 177h5v1h-5zM654 154h18v1h-18zM412 167h8v1h-8zM618 157h10v1h-10zM272 185h5v1h-5zM568 160h23v1h-23zM695 152h38v1h-38zM323 178h8v1h-8zM180 200h5v1h-5zM210 200h4v1h-4zM252 189h5v1h-5zM386 169h10v1h-10zM420 166h10v1h-10zM628 156h12v1h-12zM277 184h8v1h-8zM591 159h16v1h-16zM198 203h4v1h-4zM377 170h9v1h-9zM464 164h25v1h-25zM165 198h8v1h-8zM217 198h4v1h-4zM396 168h16v1h-16zM348 174h6v1h-6zM267 186h5v1h-5zM488 163h15v1h-15zM248 190h4v1h-4zM354 173h6v1h-6zM301 181h7v1h-7zM360 172h6v1h-6zM308 180h7v1h-7zM243 191h5v1h-5zM342 175h6v1h-6zM185 201h5v1h-5zM207 201h3v1h-3zM262 187h5v1h-5zM336 176h6v1h-6zM257 188h5v1h-5z"/>
<path fill="#c0c0c0" d="M34 203h22v1h-22zM434 165h65v1h-65zM331 174h7v1h-7zM696 174h37v1h-37zM392 167h20v1h-20zM534 167h34v1h-34zM338 173h7v1h-7zM615 173h81v1h-81zM116 198h11v1h-11zM238 185h8v1h-8zM69 201h12v1h-12zM212 188h11v1h-11zM21 204h13v1h-13zM138 196h13v1h-13zM10 205h11v1h-11zM412 166h22v1h-22zM499 166h35v1h-35zM345 172h6v1h-6zM603 172h12v1h-12zM127 197h11v1h-11zM185 190h16v1h-16zM164 193h6v1h-6zM273 180h10v1h-10zM254 183h7v1h-7zM363 169h11v1h-11zM576 169h9v1h-9zM81 200h22v1h-22zM357 170h6v1h-6zM585 170h9v1h-9zM319 175h12v1h-12zM293 178h11v1h-11zM374 168h18v1h-18zM568 168h8v1h-8zM103 199h13v1h-13zM230 186h8v1h-8zM170 192h7v1h-7zM56 202h13v1h-13zM201 189h11v1h-11zM4 206h6v1h-6zM177 191h8v1h-8zM158 194h6v1h-6zM304 177h7v1h-7zM351 171h6v1h-6zM594 171h9v1h-9zM311 176h8v1h-8zM267 181h6v1h-6zM151 195h7v1h-7zM283 179h10v1h-10zM223 187h7v1h-7zM246 184h8v1h-8zM261 182h6v1h-6z"/>
<path fill="#0000ff" d="M36 279h7v1h-7zM138 264h6v1h-6zM15 282h7v1h-7zM203 253h6v1h-6zM261 243h7v1h-7zM309 236h7v1h-7zM420 221h9v1h-9zM88 272h7v1h-7zM437 219h35v1h-35zM289 239h7v1h-7zM689 204h10v1h-10zM177 258h4v1h-4zM359 229h8v1h-8zM625 208h20v1h-20zM480 217h27v1h-27zM22 281h7v1h-7zM209 252h5v1h-5zM580 211h11v1h-11zM429 220h8v1h-8zM282 240h7v1h-7zM380 226h6v1h-6zM535 214h19v1h-19zM51 277h7v1h-7zM296 238h7v1h-7zM699 203h21v1h-21zM666 206h13v1h-13zM523 215h12v1h-12zM605 209h20v1h-20zM554 213h13v1h-13zM268 242h7v1h-7zM373 227h7v1h-7zM507 216h16v1h-16zM386 225h6v1h-6zM58 276h7v1h-7zM220 250h6v1h-6zM254 244h7v1h-7zM114 268h6v1h-6zM29 280h7v1h-7zM132 265h6v1h-6zM591 210h14v1h-14zM303 237h6v1h-6zM409 222h11v1h-11zM151 262h8v1h-8zM120 267h6v1h-6zM336 232h8v1h-8zM192 255h6v1h-6zM275 241h7v1h-7zM392 224h7v1h-7zM65 275h8v1h-8zM645 207h21v1h-21zM226 249h5v1h-5zM242 246h6v1h-6zM126 266h6v1h-6zM248 245h6v1h-6zM351 230h8v1h-8zM73 274h7v1h-7zM567 212h13v1h-13zM323 234h6v1h-6zM186 256h6v1h-6zM198 254h5v1h-5zM720 202h13v1h-13zM679 205h10v1h-10zM329 233h7v1h-7zM173 259h4v1h-4zM4 284h4v1h-4zM344 231h7v1h-7zM472 218h8v1h-8zM367 228h6v1h-6zM159 261h8v1h-8zM8 283h7v1h-7zM108 269h6v1h-6zM181 257h5v1h-5zM214 251h6v1h-6zM144 263h7v1h-7zM167 260h6v1h-6zM95 271h7v1h-7zM102 270h6v1h-6zM399 223h10v1h-10zM316 235h7v1h-7zM231 248h6v1h-6zM237 247h5v1h-5zM43 278h8v1h-8zM80 273h8v1h-8z"/>
<rect x="214" y="23" width="3" height="1" fill="#c8c8c8"/>
<rect x="213" y="24" width="1" height="3" fill="#c8c8c8"/>
<rect x="214" y="25" width="4" height="1" fill="#c8c8c8"/>
<rect x="218" y="26" width="3" height="1" fill="#c8c8c8"/>
<rect x="221" y="27" width="3" height="1" fill="#c8c8c8"/>
<rect x="224" y="28" width="1" height="1" fill="#c8c8c8"/>
<rect x="214" y="27" width="1" height="1" fill="#c8c8c8"/>
<rect x="215" y="28" width="1" height="1" fill="#c8c8c8"/>
<rect x="4" y="409" width="1" height="25" fill="#ff3232"/>
<rect x="15" y="405" width="1" height="29" fill="#ff3232"/>
<rect x="27" y="401" width="1" height="33" fill="#ff3232"/>
<rect x="39" y="401" width="1" height="33" fill="#ff3232"/>
<rect x="50" y="400" width="1" height="34" fill="#ff3232"/>
<rect x="62" y="404" width="1" height="30" fill="#ff3232"/>
<rect x="74" y="409" width="1" height="25" fill="#ff3232"/>
<rect x="85" y="411" width="1" height="23" fill="#ff3232"/>
<rect x="97" y="425" width="1" height="9" fill="#ff3232"/>
<rect x="109" y="432" width="1" height="2" fill="#ff3232"/>
<rect x="120" y="434" width="1" height="1" fill="#54ffff"/>
<rect x="132" y="426" width="1" height="8" fill="#ff3232"/>
<rect x="143" y="427" width="1" height="7" fill="#ff3232"/>
<rect x="155" y="433" width="1" height="3" fill="#54ffff"/>
<rect x="167" y="433" width="1" height="8" fill="#54ffff"/>
<rect x="190" y="429" width="1" height="5" fill="#ff3232"/>
<rect x="202" y="429" width="1" height="5" fill="#ff3232"/>
<rect x="213" y="420" width="1" height="14" fill="#ff3232"/>
<rect x="225" y="420" width="1" height="14" fill="#ff3232"/>
<rect x="237" y="426" width="1" height="8" fill="#ff3232"/>
<rect x="260" y="434" width="1" height="1" fill="#54ffff"/>
<rect x="271" y="433" width="1" height="11" fill="#54ffff"/>
<rect x="283" y="433" width="1" height="25" fill="#54ffff"/>
<rect x="295" y="433" width="1" height="34" fill="#54ffff"/>
<rect x="306" y="433" width="1" height="38" fill="#54ffff"/>
<rect x="318" y="433" width="1" height="47" fill="#54ffff"/>
<rect x="330" y="433" width="1" height="46" fill="#54ffff"/>
<rect x="341" y="433" width="1" height="41" fill="#54ffff"/>
<rect x="353" y="433" width="1" height="39" fill="#54ffff"/>
<rect x="365" y="433" width="1" height="36" fill="#54ffff"/>
<rect x="376" y="433" width="1" height="35" fill="#54ffff"/>
<rect x="388" y="433" width="1" height="31" fill="#54ffff"/>
<rect x="399" y="433" width="1" height="27" fill="#54ffff"/>
<rect x="411" y="433" width="1" height="24" fill="#54ffff"/>
<rect x="423" y="433" width="1" height="25" fill="#54ffff"/>
<rect x="434" y="433" width="1" height="21" fill="#54ffff"/>
<rect x="446" y="433" width="1" height="22" fill="#54ffff"/>
<rect x="458" y="433" width="1" height="26" fill="#54ffff"/>
<rect x="469" y="433" width="1" height="23" fill="#54ffff"/>
<rect x="481" y="433" width="1" height="17" fill="#54ffff"/>
<rect x="493" y="433" width="1" height="12" fill="#54ffff"/>
<rect x="504" y="433" width="1" height="7" fill="#54ffff"/>
<rect x="516" y="433" width="1" height="3" fill="#54ffff"/>
<rect x="527" y="428" width="1" height="6" fill="#ff3232"/>
<rect x="539" y="427" width="1" height="7" fill="#ff3232"/>
<rect x="551" y="426" width="1" height="8" fill="#ff3232"/>
<rect x="562" y="430" width="1" height="4" fill="#ff3232"/>
<rect x="574" y="428" width="1" height="6" fill="#ff3232"/>
<rect x="586" y="424" width="1" height="10" fill="#ff3232"/>
<rect x="597" y="423" width="1" height="11" fill="#ff3232"/>
<rect x="609" y="421" width="1" height="13" fill="#ff3232"/>
<rect x="620" y="411" width="1" height="23" fill="#ff3232"/>
<rect x="632" y="406" width="1" height="28" fill="#ff3232"/>
<rect x="644" y="403" width="1" height="31" fill="#ff3232"/>
<rect x="655" y="398" width="1" height="36" fill="#ff3232"/>
<rect x="667" y="397" width="1" height="37" fill="#ff3232"/>
<rect x="679" y="396" width="1" height="38" fill="#ff3232"/>
<rect x="690" y="401" width="1" height="33" fill="#ff3232"/>
<rect x="702" y="406" width="1" height="28" fill="#ff3232"/>
<rect x="714" y="415" width="1" height="19" fill="#ff3232"/>
<rect x="725" y="422" width="1" height="12" fill="#ff3232"/>
<path fill="#ffff00" d="M218 390h8v1h-8zM263 390h5v1h-5zM353 425h3v1h-3zM700 425h4v1h-4zM385 437h3v1h-3zM668 437h2v1h-2zM4 421h3v1h-3zM343 421h3v1h-3zM718 421h15v1h-15zM475 460h4v1h-4zM569 460h11v1h-11zM31 411h3v1h-3zM322 411h2v1h-2zM91 395h9v1h-9zM118 395h5v1h-5zM283 395h3v1h-3zM484 462h8v1h-8zM543 462h15v1h-15zM458 456h5v1h-5zM604 456h6v1h-6zM492 463h9v1h-9zM525 463h18v1h-18zM205 392h6v1h-6zM272 392h4v1h-4zM43 407h3v1h-3zM314 407h2v1h-2zM54 403h3v1h-3zM305 403h3v1h-3zM501 464h24v1h-24zM356 426h3v1h-3zM696 426h4v1h-4zM135 393h25v1h-25zM186 393h19v1h-19zM276 393h4v1h-4zM51 404h3v1h-3zM308 404h2v1h-2zM100 394h18v1h-18zM123 394h12v1h-12zM160 394h26v1h-26zM280 394h3v1h-3zM391 439h4v1h-4zM663 439h3v1h-3zM348 423h2v1h-2zM708 423h4v1h-4zM37 409h3v1h-3zM318 409h2v1h-2zM467 458h4v1h-4zM590 458h9v1h-9zM410 444h4v1h-4zM649 444h4v1h-4zM226 389h20v1h-20zM251 389h12v1h-12zM48 405h3v1h-3zM310 405h2v1h-2zM479 461h5v1h-5zM558 461h11v1h-11zM399 441h3v1h-3zM658 441h3v1h-3zM359 427h3v1h-3zM692 427h4v1h-4zM57 402h3v1h-3zM303 402h2v1h-2zM426 448h4v1h-4zM636 448h3v1h-3zM211 391h7v1h-7zM268 391h4v1h-4zM442 452h4v1h-4zM621 452h4v1h-4zM362 428h3v1h-3zM689 428h3v1h-3zM246 388h5v1h-5zM446 453h4v1h-4zM617 453h4v1h-4zM346 422h2v1h-2zM712 422h6v1h-6zM422 447h4v1h-4zM639 447h3v1h-3zM84 396h7v1h-7zM286 396h3v1h-3zM433 450h5v1h-5zM629 450h4v1h-4zM367 430h2v1h-2zM685 430h2v1h-2zM395 440h4v1h-4zM661 440h2v1h-2zM74 398h5v1h-5zM292 398h3v1h-3zM471 459h4v1h-4zM580 459h10v1h-10zM382 436h3v1h-3zM670 436h3v1h-3zM378 435h4v1h-4zM673 435h2v1h-2zM438 451h4v1h-4zM625 451h4v1h-4zM418 446h4v1h-4zM642 446h3v1h-3zM60 401h4v1h-4zM300 401h3v1h-3zM40 408h3v1h-3zM316 408h2v1h-2zM374 433h2v1h-2zM678 433h2v1h-2zM406 443h4v1h-4zM653 443h3v1h-3zM79 397h5v1h-5zM289 397h3v1h-3zM463 457h4v1h-4zM599 457h5v1h-5zM69 399h5v1h-5zM295 399h3v1h-3zM369 431h3v1h-3zM682 431h3v1h-3zM402 442h4v1h-4zM656 442h2v1h-2zM450 454h4v1h-4zM613 454h4v1h-4zM28 412h3v1h-3zM324 412h2v1h-2zM388 438h3v1h-3zM666 438h2v1h-2zM23 414h3v1h-3zM328 414h2v1h-2zM365 429h2v1h-2zM687 429h2v1h-2zM13 418h3v1h-3zM336 418h3v1h-3zM350 424h3v1h-3zM704 424h4v1h-4zM34 410h3v1h-3zM320 410h2v1h-2zM376 434h2v1h-2zM675 434h3v1h-3zM7 420h3v1h-3zM341 420h2v1h-2zM430 449h3v1h-3zM633 449h3v1h-3zM64 400h5v1h-5zM298 400h2v1h-2zM10 419h3v1h-3zM339 419h2v1h-2zM21 415h2v1h-2zM330 415h2v1h-2zM414 445h4v1h-4zM645 445h4v1h-4zM19 416h2v1h-2zM332 416h2v1h-2zM16 417h3v1h-3zM334 417h2v1h-2zM454 455h4v1h-4zM610 455h3v1h-3zM46 406h2v1h-2zM312 406h2v1h-2zM26 413h2v1h-2zM326 413h2v1h-2zM372 432h2v1h-2zM680 432h2v1h-2z"/>
<path fill="#ffffff" d="M466 470h3v1h-3zM483 470h8v1h-8zM419 459h3v1h-3zM537 459h9v1h-9zM556 459h9v1h-9zM50 389h4v1h-4zM95 389h2v1h-2zM205 389h2v1h-2zM253 389h5v1h-5zM379 452h4v1h-4zM594 452h7v1h-7zM333 439h4v1h-4zM626 439h2v1h-2zM328 437h2v1h-2zM630 437h2v1h-2zM39 393h3v1h-3zM108 393h4v1h-4zM125 393h2v1h-2zM151 393h2v1h-2zM185 393h4v1h-4zM264 393h2v1h-2zM422 460h7v1h-7zM533 460h4v1h-4zM67 386h8v1h-8zM89 386h2v1h-2zM211 386h2v1h-2zM242 386h3v1h-3zM689 412h8v1h-8zM705 412h8v1h-8zM81 384h6v1h-6zM216 384h6v1h-6zM233 384h6v1h-6zM337 440h4v1h-4zM624 440h2v1h-2zM36 394h3v1h-3zM112 394h4v1h-4zM123 394h2v1h-2zM153 394h3v1h-3zM181 394h4v1h-4zM298 417h2v1h-2zM673 417h3v1h-3zM730 417h3v1h-3zM25 398h2v1h-2zM166 398h3v1h-3zM459 468h3v1h-3zM500 468h8v1h-8zM30 396h3v1h-3zM119 396h2v1h-2zM160 396h3v1h-3zM173 396h4v1h-4zM376 451h3v1h-3zM601 451h7v1h-7zM47 390h3v1h-3zM97 390h4v1h-4zM131 390h14v1h-14zM203 390h2v1h-2zM258 390h3v1h-3zM44 391h3v1h-3zM101 391h4v1h-4zM129 391h2v1h-2zM145 391h3v1h-3zM195 391h8v1h-8zM261 391h2v1h-2zM462 469h4v1h-4zM491 469h9v1h-9zM415 458h4v1h-4zM546 458h10v1h-10zM565 458h6v1h-6zM645 430h2v1h-2zM447 464h3v1h-3zM521 464h2v1h-2zM678 415h3v1h-3zM723 415h4v1h-4zM450 465h3v1h-3zM518 465h3v1h-3zM42 392h2v1h-2zM105 392h3v1h-3zM127 392h2v1h-2zM148 392h3v1h-3zM189 392h6v1h-6zM75 385h6v1h-6zM87 385h2v1h-2zM213 385h3v1h-3zM239 385h3v1h-3zM292 413h2v1h-2zM685 413h4v1h-4zM713 413h5v1h-5zM469 471h14v1h-14zM16 402h2v1h-2zM277 402h2v1h-2zM222 383h11v1h-11zM399 456h11v1h-11zM576 456h4v1h-4zM304 421h2v1h-2zM663 421h2v1h-2zM54 388h6v1h-6zM93 388h2v1h-2zM207 388h2v1h-2zM248 388h5v1h-5zM453 466h3v1h-3zM514 466h4v1h-4zM383 453h3v1h-3zM587 453h7v1h-7zM7 407h2v1h-2zM284 407h2v1h-2zM12 404h2v1h-2zM280 404h2v1h-2zM429 461h8v1h-8zM529 461h4v1h-4zM360 447h4v1h-4zM442 463h5v1h-5zM523 463h3v1h-3zM27 397h3v1h-3zM163 397h3v1h-3zM169 397h4v1h-4zM270 397h2v1h-2zM344 442h3v1h-3zM620 442h2v1h-2zM20 400h3v1h-3zM364 448h4v1h-4zM326 436h2v1h-2zM632 436h2v1h-2zM33 395h3v1h-3zM116 395h3v1h-3zM121 395h2v1h-2zM156 395h4v1h-4zM177 395h4v1h-4zM267 395h2v1h-2zM681 414h4v1h-4zM718 414h5v1h-5zM456 467h3v1h-3zM508 467h6v1h-6zM386 454h6v1h-6zM583 454h4v1h-4zM650 427h2v1h-2zM697 411h8v1h-8zM60 387h7v1h-7zM91 387h2v1h-2zM209 387h2v1h-2zM245 387h3v1h-3zM350 444h3v1h-3zM368 449h4v1h-4zM610 449h2v1h-2zM341 441h3v1h-3zM622 441h2v1h-2zM392 455h7v1h-7zM580 455h3v1h-3zM410 457h5v1h-5zM571 457h5v1h-5zM372 450h4v1h-4zM608 450h2v1h-2zM330 438h3v1h-3zM628 438h2v1h-2zM670 418h3v1h-3zM347 443h3v1h-3zM618 443h2v1h-2zM18 401h2v1h-2zM314 429h2v1h-2zM647 429h2v1h-2zM357 446h3v1h-3zM614 446h2v1h-2zM5 408h2v1h-2zM9 406h2v1h-2zM324 435h2v1h-2zM634 435h2v1h-2zM353 445h4v1h-4zM23 399h2v1h-2zM273 399h2v1h-2zM296 416h2v1h-2zM676 416h2v1h-2zM727 416h3v1h-3zM318 432h2v1h-2zM641 432h2v1h-2zM643 431h2v1h-2zM308 424h2v1h-2zM656 424h2v1h-2zM437 462h5v1h-5zM526 462h3v1h-3zM320 433h2v1h-2zM639 433h2v1h-2zM322 434h2v1h-2zM636 434h3v1h-3zM658 423h2v1h-2zM301 419h2v1h-2zM668 419h2v1h-2zM654 425h2v1h-2zM665 420h3v1h-3zM660 422h3v1h-3zM652 426h2v1h-2zM288 410h2v1h-2zM14 403h2v1h-2zM4 409h1v1h-1zM11 405h1v1h-1zM283 406h1v1h-1zM312 427h1v1h-1zM286 408h1v1h-1zM316 430h1v1h-1zM290 411h1v1h-1zM287 409h1v1h-1zM313 428h1v1h-1zM306 422h1v1h-1zM294 414h1v1h-1zM303 420h1v1h-1zM291 412h1v1h-1zM317 431h1v1h-1zM300 418h1v1h-1zM649 428h1v1h-1zM310 425h1v1h-1zM307 423h1v1h-1zM275 400h1v1h-1zM266 394h1v1h-1zM311 426h1v1h-1zM613 447h1v1h-1zM269 396h1v1h-1zM295 415h1v1h-1zM612 448h1v1h-1zM272 398h1v1h-1zM617 444h1v1h-1zM263 392h1v1h-1zM282 405h1v1h-1zM276 401h1v1h-1zM279 403h1v1h-1zM616 445h1v1h-1z"/>
<g shape-rendering="auto"><circle cx="96.0" cy="11.0" r="6.1" fill="#888888"/><path d="M92.8 9.6 L96.0 12.7 L99.2 9.6" fill="none" stroke="#18181c" stroke-width="1.2"/></g>
<g shape-rendering="auto"><circle cx="7.0" cy="370.0" r="6.1" fill="#888888"/><path d="M3.8 368.6 L7.0 371.7 L10.2 368.6" fill="none" stroke="#18181c" stroke-width="1.2"/></g>
<g shape-rendering="auto"><path d="M532 347 H543 L545 349 V360 H532 Z" fill="#0b3a7a"/></g>
</svg>
<div class="t" style="left:2px;top:4px;color:#d4d4d4;"><span class="cj">金丹科技</span><span style="margin-left:2.2px">(</span><span class="cj" style="margin-left:-0.5px">日线</span>)</div>
<div class="t" style="left:107px;top:4px;color:#e6e6e6;">MA5: 16.88</div>
<div class="t" style="left:177px;top:4px;color:#ffff00;">MA10: 16.80</div>
<div class="t" style="left:254px;top:4px;color:#ff00ff;">MA20: 16.90</div>
<div class="t" style="left:330.5px;top:4px;color:#00e600;">MA60: 17.77</div>
<div class="t" style="left:407.5px;top:4px;color:#c0c0c0;letter-spacing:0.08px;">MA120: 18.10</div>
<div class="t" style="left:491.2px;top:4px;color:#0000ff;letter-spacing:0.08px;">MA250: 18.04</div>
<div class="t" style="left:227.5px;top:24px;color:#c0c0c0;font-size:12px;">20.47</div>
<div class="t" style="left:17.5px;top:363px;color:#c8c8c8;letter-spacing:-0.14px;">MACD(12,26,9)</div>
<div class="t" style="left:108px;top:363px;color:#e6e6e6;letter-spacing:-0.11px;">DIF: -0.26</div>
<div class="t" style="left:168.8px;top:363px;color:#ffff00;letter-spacing:-0.24px;">DEA: -0.33</div>
<div class="t" style="left:234px;top:363px;color:#ff00ff;">MACD: 0.14</div>
<div class="t" style="left:532.5px;top:346.5px;color:#ffffff;font-size:11.5px;line-height:13px;height:13px;font-family:'Noto Sans CJK SC',sans-serif;">财</div>
</body></html>
